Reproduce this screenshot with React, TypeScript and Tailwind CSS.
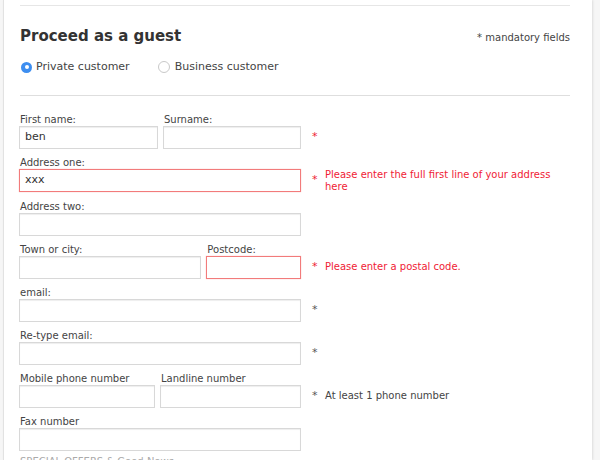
import type { ReactNode } from "react";

const Field = ({
  label,
  w,
  error,
  value,
}: {
  label: string;
  w: string;
  error?: boolean;
  value?: string;
}) => (
  <div className={`flex flex-col ${w}`}>
    <span className="text-[10px] leading-[12px] text-[#444] pl-[1px]">{label}</span>
    <div
      className={`h-[23px] flex items-center px-[5px] text-[11px] text-[#333] border ${
        error
          ? "border-[#f27b7b] shadow-[0_0_1px_#f8b4b4]"
          : "border-[#d8d8d8] shadow-[inset_0_1px_1px_#eeeeee]"
      }`}
    >
      {value}
    </div>
  </div>
);

const Row = ({
  children,
  star,
  message,
}: {
  children: ReactNode;
  star?: "red" | "dark";
  message?: ReactNode;
}) => (
  <div className="flex mb-[8px]">
    <div className="w-[282px] flex gap-[5px]">{children}</div>
    <div className="flex pt-[17px] pl-[11px]">
      <span
        className={`w-[13px] text-[11px] leading-[12px] ${
          star === "red" ? "text-[#ee2233]" : "text-[#555]"
        }`}
      >
        {star ? "*" : ""}
      </span>
      {message}
    </div>
  </div>
);

export default function App() {
  return (
    <div className="w-[600px] h-[460px] overflow-hidden bg-[#f6f6f6] font-['DejaVu_Sans',sans-serif]">
      <div className="ml-[3px] w-[589px] h-full bg-white border-l border-[#e2e2e2] shadow-[1px_0_2px_#dcdcdc] pl-[15px] pr-[22px] pt-[5px]">
        <div className="h-[1px] bg-[#e6e6e6] ml-[1px]" />
        <div className="flex items-end justify-between mt-[20px] pl-[1px]">
          <h1 className="text-[15px] font-bold text-[#333] leading-[20px]">Proceed as a guest</h1>
          <span className="text-[10px] text-[#444] mb-[1px]">* mandatory fields</span>
        </div>
        <div className="flex items-center mt-[13px] text-[11px] text-[#444] pl-[1px]">
          <span className="w-[11px] h-[11px] rounded-full bg-[#3d8ef0] flex items-center justify-center ml-[1px]">
            <span className="w-[4px] h-[4px] rounded-full bg-white" />
          </span>
          <span className="ml-[4px]">Private customer</span>
          <span className="ml-[28px] w-[12px] h-[12px] rounded-full border border-[#c9c9c9] bg-white" />
          <span className="ml-[5px]">Business customer</span>
        </div>
        <div className="h-[1px] bg-[#dedede] mt-[19px] mb-[18px] ml-[1px]" />

        <Row star="red">
          <Field label="First name:" w="w-[139px]" value="ben" />
          <Field label="Surname:" w="w-[138px]" />
        </Row>
        <Row
          star="red"
          message={
            <span className="w-[245px] text-[10px] leading-[12px] text-[#f02235] -mt-[5px]">
              Please enter the full first line of your address here
            </span>
          }
        >
          <Field label="Address one:" w="w-[282px]" error value="xxx" />
        </Row>
        <Row>
          <Field label="Address two:" w="w-[282px]" />
        </Row>
        <Row
          star="red"
          message={
            <span className="text-[10px] leading-[12px] text-[#f02235]">
              Please enter a postal code.
            </span>
          }
        >
          <Field label="Town or city:" w="w-[183px]" />
          <Field label="Postcode:" w="w-[95px]" error />
        </Row>
        <Row star="dark">
          <Field label="email:" w="w-[282px]" />
        </Row>
        <Row star="dark">
          <Field label="Re-type email:" w="w-[282px]" />
        </Row>
        <Row
          star="dark"
          message={
            <span className="text-[10px] leading-[12px] text-[#444]">At least 1 phone number</span>
          }
        >
          <Field label="Mobile phone number" w="w-[136px]" />
          <Field label="Landline number" w="w-[141px]" />
        </Row>
        <Row>
          <Field label="Fax number" w="w-[282px]" />
        </Row>
        <div className="text-[10px] leading-[12px] text-[#aaa] -mt-[3px] pl-[1px]">SPECIAL OFFERS &amp; Good News</div>
      </div>
    </div>
  );
}
